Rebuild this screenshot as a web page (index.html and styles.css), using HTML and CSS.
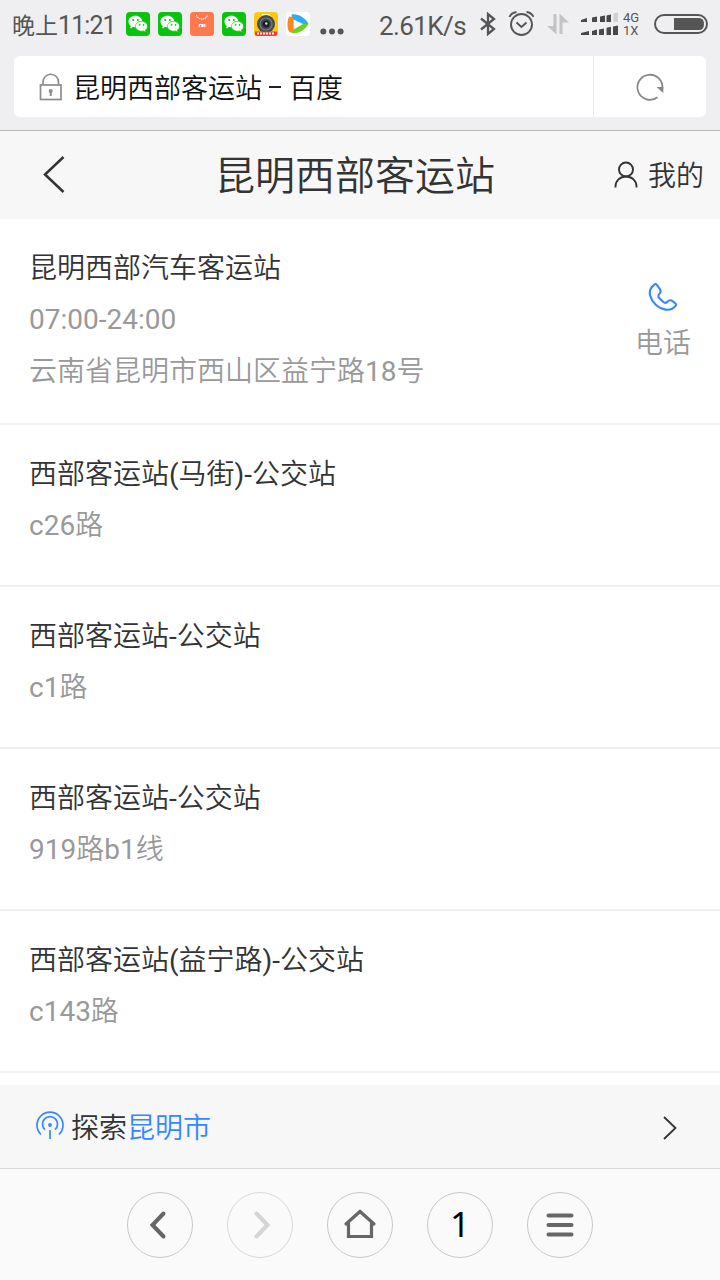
FILE: index.html
```html
<!DOCTYPE html>
<html lang="zh-CN">
<head>
    <meta charset="UTF-8">
    <meta name="viewport" content="width=device-width, initial-scale=1.0">
    <title>昆明西部客运站 - 百度</title>
    <link rel="stylesheet" href="styles.css">
</head>
<body>
<!-- Shared WeChat icon -->
<svg class="defs" width="0" height="0">
    <symbol id="wechat" viewBox="0 0 24 24">
        <rect width="24" height="24" rx="4" fill="#09c40c"/>
        <path d="M9.500 3.800C5.400 3.800 2.500 6.400 2.500 9.500c0 1.900.9 3.300 2.300 4.400L4.200 16.400l2.700-1.400c.8.2 1.700.3 2.600.3 3.800 0 6.700-2.500 6.700-5.700S13.300 3.800 9.500 3.800z" fill="#fff"/>
        <path d="M15.400 9.300c-3.400 0-5.900 2.200-5.900 5s2.600 4.900 5.900 4.900c.7 0 1.500-.1 2.100-.3l2.500 1.400-.7-2.100c1.400-.9 2.200-2.300 2.200-3.900 0-2.800-2.700-5-6.100-5z" fill="#fff" stroke="#09c40c" stroke-width=".6"/>
        <g fill="#09c40c"><circle cx="7.200" cy="8" r="1"/><circle cx="11.800" cy="8" r="1"/><circle cx="13.600" cy="12.800" r=".9"/><circle cx="17.500" cy="12.800" r=".9"/></g>
    </symbol>
</svg>

<div class="status-bar">
    <span class="clock">晚上<b>11:21</b></span>
    <div class="notices">
        <svg width="24" height="24"><use href="#wechat"/></svg>
        <svg width="24" height="24"><use href="#wechat"/></svg>
        <svg width="24" height="24" viewBox="0 0 24 24">
            <rect width="24" height="24" rx="3.500" fill="#ff784e"/>
            <path d="M6.500 3c1 5.500 10 5.500 11 0" fill="none" stroke="#fff" stroke-width="1.100" stroke-dasharray="1.500 .6"/>
            <path d="M9.300 15v-2.500h2.500V15M13 15v-3M14.800 12v3" fill="none" stroke="#fff" stroke-width="1.200"/>
        </svg>
        <svg width="24" height="24"><use href="#wechat"/></svg>
        <svg width="24" height="24" viewBox="0 0 24 24">
            <rect width="24" height="24" rx="3.500" fill="#ffc80a"/>
            <path d="M8 2h8v3H8z" fill="#fff3b0"/>
            <circle cx="12" cy="12" r="9" fill="#444b55"/>
            <circle cx="12" cy="12" r="6" fill="none" stroke="#727a83" stroke-width="1.200"/>
            <circle cx="12" cy="12" r="3.500" fill="#1c2026"/>
            <circle cx="12.300" cy="11.500" r="1.200" fill="#d8dde2"/>
            <path d="M1 19.500h22v2.500a2 2 0 0 1-2 2H3a2 2 0 0 1-2-2z" fill="#f03b2d"/>
            <path d="M3 21.500h18" stroke="#fff" stroke-width="2" stroke-dasharray="2 1"/>
        </svg>
        <svg width="24" height="24" viewBox="0 0 24 24">
            <rect width="24" height="24" rx="3.500" fill="#fff"/>
            <path d="M5.500 2.500C12 1.500 19.500 6 22.500 12H7z" fill="#2eaaf8"/>
            <path d="M22.500 12C19.500 17.500 12 22.500 5.500 21L7 12z" fill="#6fce1f"/>
            <path d="M3.500 4.500c2.500 0 4 1 4 3V18c0 2-2 2.800-3.500 2.300C2 19 1.500 16 1.500 12.500S2 5.500 3.500 4.500z" fill="#ff861f"/>
            <path d="M7.500 7.500l9.500 4.500-9.500 5.500z" fill="#fff"/>
        </svg>
        <svg class="more" width="24" height="24" viewBox="0 0 24 24" fill="#555"><circle cx="3.300" cy="19.500" r="3"/><circle cx="12" cy="19.500" r="3"/><circle cx="20.600" cy="19.500" r="3"/></svg>
    </div>
    <span class="speed">2.61K/s</span>
    <svg class="bluetooth" width="18" height="24" viewBox="0 0 18 24" fill="none" stroke="#555" stroke-width="2.300"><path d="M2 6.500L15 17l-6 5V2L15 7 2 17.500"/></svg>
    <svg class="alarm" width="26" height="26" viewBox="0 0 26 26" fill="none" stroke="#555" stroke-width="1.900">
        <circle cx="13.500" cy="13.500" r="10.500"/><path d="M8.500 11.500l5 4.500 5-4.500M1.500 6C2.500 3.500 5 1.500 8.500 1M25.500 6C24.500 3.500 22 1.500 18.500 1"/>
    </svg>
    <svg class="data" width="22" height="22" viewBox="0 0 22 22" fill="#c3c3c5"><path d="M6.500 1h3v20H9L0 13h6.500zM12.500 21h3V9.500H22L13 1h-.5z"/></svg>
    <svg class="signal" width="38" height="24" viewBox="0 0 38 24" fill="#484848">
        <path d="M0 8l6-2v4H0zM11 5.500L16 4.500V10h-5zM19 4.500l5-1V10h-5zM25.500 3.500l4.500-1V10h-4.500z"/><path d="M32.500 1.500l4.500-1V10h-4.500z" fill="#d0d0d2"/>
        <path d="M0 21l8-2v4H0zM11 19l5-1.500V23h-5zM18 17.500l5-1V23h-5zM25.500 15.800l4.500-1V23h-4.500zM32 14.500l5-1V23h-5z"/>
    </svg>
    <div class="network"><span>4G</span><span>1X</span></div>
    <svg class="battery" width="54" height="20" viewBox="0 0 54 20"><rect x="1" y="1" width="52" height="18" rx="9" fill="none" stroke="#555" stroke-width="2"/><path d="M20 4h25q5 0 5 6t-5 6H20z" fill="#555"/></svg>
</div>

<div class="address-bar">
    <div class="address">
        <svg width="24" height="28" viewBox="0 0 24 28" fill="none" stroke="#8d8d8d" stroke-width="1.700"><rect x="1.500" y="12" width="20.500" height="14.500"/><path d="M4 12V9a7.700 7.700 0 0 1 15.500 0v3"/><path d="M11.700 18v5" stroke-width="2"/><circle cx="11.700" cy="18" r="1.200" fill="#8d8d8d"/></svg>
        <span>昆明西部客运站</span><span class="dash"></span><span>百度</span>
    </div>
    <div class="reload">
        <svg width="30" height="30" viewBox="0 0 30 30"><path d="M22.500 25.200A12.500 12.500 0 1 1 27.300 17" fill="none" stroke="#888" stroke-width="1.800"/><path d="M21.500 15h6.800v6z" fill="#858585"/></svg>
    </div>
</div>

<header class="page-header">
    <svg class="back" width="24" height="40" viewBox="0 0 24 40" fill="none" stroke="#333" stroke-width="2.500"><path d="M21.500 2L3 19.500 21.500 37"/></svg>
    <h1>昆明西部客运站</h1>
    <div class="mine">
        <svg width="24" height="28" viewBox="0 0 24 28" fill="none" stroke="#333" stroke-width="1.900"><circle cx="12" cy="8.500" r="7"/><path d="M1.500 26.500v-1.300C1.500 20 6 15.500 12 15.500s10.500 4.500 10.500 9.700v1.300"/></svg>
        <span>我的</span>
    </div>
</header>

<main class="results">
    <div class="item item-main">
        <div>
            <h2>昆明西部汽车客运站</h2>
            <p>07:00-24:00</p>
            <p>云南省昆明市西山区益宁路18号</p>
        </div>
        <div class="phone">
            <svg width="30" height="30" viewBox="0 0 30 30" fill="none" stroke="#3388ff" stroke-width="2.100" stroke-linejoin="round"><path d="M6.200 2.800C2.500 5.500 1 9.500 2.300 14c2 7 8 12.500 15.200 13.600 4.200.6 8-.9 10.400-4.300q.5-.9-.2-1.600l-3-2.500c-2-1.500-3.800-1.200-5.400.6-1.300 1.400-2.700 1.400-3.900.3l-4.200-4.100c-1.300-1.300-1.200-2.800.1-4 1.600-1.500 1.700-3.300.4-5.200L8.600 2.600q-1-1.300-2.400.2z"/></svg>
            <span>电话</span>
        </div>
    </div>
    <div class="item">
        <h2>西部客运站(马街)-公交站</h2>
        <p>c26路</p>
    </div>
    <div class="item">
        <h2>西部客运站-公交站</h2>
        <p>c1路</p>
    </div>
    <div class="item">
        <h2>西部客运站-公交站</h2>
        <p>919路b1线</p>
    </div>
    <div class="item">
        <h2>西部客运站(益宁路)-公交站</h2>
        <p>c143路</p>
    </div>
</main>

<div class="explore">
    <svg width="30" height="30" viewBox="0 0 30 30" fill="none" stroke="#3388ff" stroke-width="1.700"><path d="M6 23.500A13 13 0 1 1 24 23.500M10 18.700a7.500 7.500 0 1 1 10 0M15 19v9"/><circle cx="15" cy="14" r="1.900" fill="#3388ff" stroke="none"/></svg>
    <span>探索<a>昆明市</a></span>
    <svg class="arrow" width="16" height="26" viewBox="0 0 16 26" fill="none" stroke="#333" stroke-width="1.800"><path d="M2 2l11.500 11L2 24"/></svg>
</div>

<nav class="toolbar">
    <div class="tool"><svg width="34" height="34" viewBox="0 0 34 34"><path d="M20.500 5.500L9.500 17l11 11.500"/></svg></div>
    <div class="tool disabled"><svg width="34" height="34" viewBox="0 0 34 34"><path d="M13.500 5.500l11 11.500-11 11.500"/></svg></div>
    <div class="tool"><svg class="home" width="34" height="34" viewBox="0 0 34 34"><path d="M3 16L17 3.500 31 16M5.500 15v13.500h23V15"/></svg></div>
    <div class="tool count">1</div>
    <div class="tool"><svg width="34" height="34" viewBox="0 0 34 34"><path d="M5.500 7.500h23M5.500 17h23M5.500 26.500h23"/></svg></div>
</nav>
</body>
</html>
```

FILE: styles.css
```css
* {
    box-sizing: border-box;
}
body {
    margin: 0;
    width: 720px;
    height: 1280px;
    overflow: hidden;
    display: flex;
    flex-direction: column;
    font-family: Roboto, "Noto Sans CJK SC DemiLight", "Noto Sans CJK SC", sans-serif;
    font-size: 28px;
    color: #333;
    background-color: #fff;
}
svg {
    display: block;
    flex: none;
}
.defs {
    position: absolute;
}
h1, h2, p {
    margin: 0;
    font-weight: 400;
}

/* Status bar */
.status-bar {
    display: flex;
    align-items: center;
    height: 48px;
    padding-left: 12px;
    background-color: #efeff1;
    color: #555;
    white-space: nowrap;
}
.clock {
    width: 114px;
    padding-top: 4px;
    font-family: Roboto, "Noto Sans CJK SC", sans-serif;
    font-size: 23px;
    line-height: 44px;
}
.clock b {
    font-size: 25px;
    font-weight: 400;
    letter-spacing: -0.9px;
}
.notices {
    display: flex;
    gap: 8px;
}
.more {
    margin-left: 2px;
}
.speed {
    width: 100px;
    margin-left: 35px;
    padding-top: 4px;
    font-size: 26px;
    line-height: 44px;
    letter-spacing: -0.6px;
}
.alarm {
    margin-left: 11px;
}
.data {
    margin-left: 13px;
}
.signal {
    margin-left: 12px;
}
.network {
    display: flex;
    flex-direction: column;
    width: 20px;
    margin-left: 4px;
    font-size: 13px;
    line-height: 13px;
}
.battery {
    margin-left: 11px;
}

/* Address bar */
.address-bar {
    display: flex;
    height: 83px;
    padding: 8px 14px 13px;
    background-color: #efeff1;
    border-bottom: 1px solid #bbb;
}
.address {
    display: flex;
    align-items: center;
    width: 579px;
    padding-left: 25px;
    border-radius: 6px 0 0 6px;
    background-color: #fff;
    color: #111;
    font-size: 27px;
}
.address svg {
    margin-right: 10px;
}
.dash {
    width: 12px;
    height: 2px;
    margin: 0 8px 0 7px;
    background-color: #222;
}
.reload {
    display: flex;
    flex: 1;
    align-items: center;
    justify-content: center;
    border-left: 1px solid #e9e9eb;
    border-radius: 0 6px 6px 0;
    background-color: #fff;
}

/* Page header */
.page-header {
    display: flex;
    align-items: center;
    height: 88px;
    padding: 0 16px 0 42px;
    background-color: #f7f7f7;
}
.page-header h1 {
    width: 282px;
    margin-left: 149px;
    padding-bottom: 4px;
    font-size: 40px;
    white-space: nowrap;
}
.mine {
    display: flex;
    align-items: center;
    gap: 10px;
    margin-left: auto;
}
.mine span {
    padding-bottom: 3px;
}

/* Results */
.results {
    flex: 1;
}
.item {
    height: 162px;
    padding: 23px 29px 0;
    border-bottom: 2px solid #f0f0f0;
    line-height: 52px;
}
.item h2 {
    margin: 1px 0 -1px;
    font-size: 28px;
}
.item p {
    color: #999;
}
.item-main {
    display: flex;
    justify-content: space-between;
    height: 206px;
}
.phone {
    display: flex;
    flex-direction: column;
    align-items: center;
    padding-top: 40px;
    color: #999;
}
.phone span {
    line-height: 64px;
}

/* Explore */
.explore {
    display: flex;
    align-items: center;
    height: 83px;
    padding: 0 42px 0 35px;
    background-color: #f7f7f7;
}
.explore svg {
    margin-bottom: 2px;
}
.explore span {
    margin-left: 6px;
    padding-bottom: 2px;
}
.explore a {
    color: #3388ff;
}
.explore .arrow {
    margin: 3px 0 0 auto;
}

/* Bottom toolbar */
.toolbar {
    display: flex;
    justify-content: center;
    gap: 34px;
    height: 112px;
    padding-top: 23px;
    border-top: 1px solid #d9d9d9;
    background-color: #fafafa;
}
.tool {
    display: flex;
    align-items: center;
    justify-content: center;
    width: 66px;
    height: 66px;
    border: 1px solid #c8c8c8;
    border-radius: 50%;
}
.tool path {
    fill: none;
    stroke: #666;
    stroke-width: 4;
    stroke-linecap: round;
}
.tool .home path {
    stroke-width: 3.2;
}
.disabled {
    border-color: #d8d8d8;
}
.disabled path {
    stroke: #d5d5d5;
}
.count {
    padding-bottom: 4px;
    font-family: "Noto Sans", sans-serif;
    font-size: 35px;
    color: #000;
}
```
